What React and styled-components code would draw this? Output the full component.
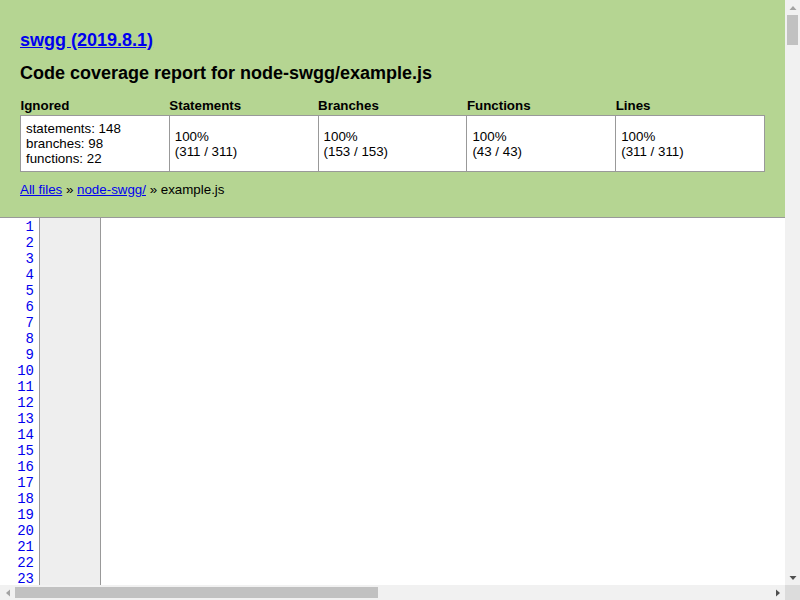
import React from "react";
import styled, { createGlobalStyle } from "styled-components";

const GlobalStyle = createGlobalStyle`
  html, body {
    margin: 0;
    padding: 0;
  }
  body {
    font-family: "Liberation Sans", Arial, Helvetica, sans-serif;
    font-size: 10pt;
    color: #000;
    background: #fff;
  }
  a {
    color: #0000ee;
  }
`;

// window frame: page area plus the two drawn scroll bars
const Frame = styled.div`
  display: grid;
  grid-template-columns: 1fr 15px;
  grid-template-rows: 1fr 15px;
  width: 100vw;
  height: 100vh;
  overflow: hidden;
`;

const Page = styled.div`
  overflow: hidden;
  min-width: 0;
  min-height: 0;
`;

const VBar = styled.div`
  background: #f1f1f1;
  display: flex;
  flex-direction: column;
  align-items: center;
`;

const HBar = styled.div`
  background: #f1f1f1;
  display: flex;
  align-items: center;
`;

const Corner = styled.div`
  background: #dcdcdc;
`;

const ArrowButton = styled.div`
  width: 15px;
  height: 15px;
  flex: none;
  display: flex;
  align-items: center;
  justify-content: center;
`;

const VThumb = styled.div`
  width: 11px;
  height: 30px;
  background: #c1c1c1;
`;

const Spacer = styled.div`
  flex: 1;
`;

const HThumb = styled.div`
  width: 363px;
  height: 11px;
  background: #c1c1c1;
`;

const Header = styled.div`
  background: #b5d592;
  padding: 30px 20px 20px 20px;
  border-bottom: 1px solid #999;
`;

const Title = styled.h1`
  margin: 0;
  font-size: 18px;
  line-height: 21px;
  font-weight: bold;
  & + & {
    margin-top: 12px;
  }
`;

const Summary = styled.table`
  width: 100%;
  margin-top: 14px;
  border-collapse: collapse;
  table-layout: fixed;
  line-height: 15px;
  th {
    text-align: left;
    font-weight: bold;
    padding: 0 0 2px 0;
  }
  td {
    background: #fff;
    border: 1px solid #999;
    padding: 5px;
    vertical-align: middle;
  }
`;

const Crumbs = styled.div`
  margin-top: 10px;
  line-height: 15px;
`;

const Lines = styled.div`
  display: flex;
  align-items: stretch;
`;

const LineNumbers = styled.div`
  flex: none;
  width: 34px;
  padding-right: 5px;
  border-right: 1px solid #999;
  text-align: right;
  font-family: "Liberation Mono", monospace;
  font-size: 14px;
  line-height: 16px;
  padding-top: 1px;
  a {
    display: block;
    color: #0000ee;
    text-decoration: none;
  }
`;

const CoverageGutter = styled.div`
  flex: none;
  width: 60px;
  background: #eee;
  border-right: 1px solid #999;
`;

const Code = styled.pre`
  flex: 1;
  margin: 0;
  font-family: "Liberation Mono", monospace;
  font-size: 14px;
  line-height: 16px;
`;

const Arrow = ({ dir, color }) => {
  const pts = {
    up: "0.5,6 4,2 7.5,6",
    down: "0.5,2 4,6 7.5,2",
    left: "6,0.5 2,4 6,7.5",
    right: "2,0.5 6,4 2,7.5",
  }[dir];
  return (
    <svg width="8" height="8" viewBox="0 0 8 8">
      <polygon points={pts} fill={color} />
    </svg>
  );
};

const columns = [
  { name: "Ignored", lines: ["statements: 148", "branches: 98", "functions: 22"] },
  { name: "Statements", lines: ["100%", "(311 / 311)"] },
  { name: "Branches", lines: ["100%", "(153 / 153)"] },
  { name: "Functions", lines: ["100%", "(43 / 43)"] },
  { name: "Lines", lines: ["100%", "(311 / 311)"] },
];

const LINE_COUNT = 23;

export default function App() {
  const numbers = Array.from({ length: LINE_COUNT }, (_, i) => i + 1);
  return (
    <>
      <GlobalStyle />
      <Frame>
        <Page>
          <Header>
            <Title>
              <a href="#">swgg (2019.8.1)</a>
            </Title>
            <Title>Code coverage report for node-swgg/example.js</Title>
            <Summary>
              <thead>
                <tr>
                  {columns.map((c) => (
                    <th key={c.name}>{c.name}</th>
                  ))}
                </tr>
              </thead>
              <tbody>
                <tr>
                  {columns.map((c) => (
                    <td key={c.name}>
                      {c.lines.map((l, i) => (
                        <React.Fragment key={i}>
                          {i > 0 && <br />}
                          {l}
                        </React.Fragment>
                      ))}
                    </td>
                  ))}
                </tr>
              </tbody>
            </Summary>
            <Crumbs>
              <a href="#">All files</a> &raquo; <a href="#">node-swgg/</a> &raquo; example.js
            </Crumbs>
          </Header>
          <Lines>
            <LineNumbers>
              {numbers.map((n) => (
                <a key={n} href={`#L${n}`}>
                  {n}
                </a>
              ))}
            </LineNumbers>
            <CoverageGutter />
            <Code />
          </Lines>
        </Page>
        <VBar>
          <ArrowButton>
            <Arrow dir="up" color="#a3a3a3" />
          </ArrowButton>
          <VThumb />
          <Spacer />
          <ArrowButton>
            <Arrow dir="down" color="#505050" />
          </ArrowButton>
        </VBar>
        <HBar>
          <ArrowButton>
            <Arrow dir="left" color="#a3a3a3" />
          </ArrowButton>
          <HThumb />
          <Spacer />
          <ArrowButton>
            <Arrow dir="right" color="#505050" />
          </ArrowButton>
        </HBar>
        <Corner />
      </Frame>
    </>
  );
}
